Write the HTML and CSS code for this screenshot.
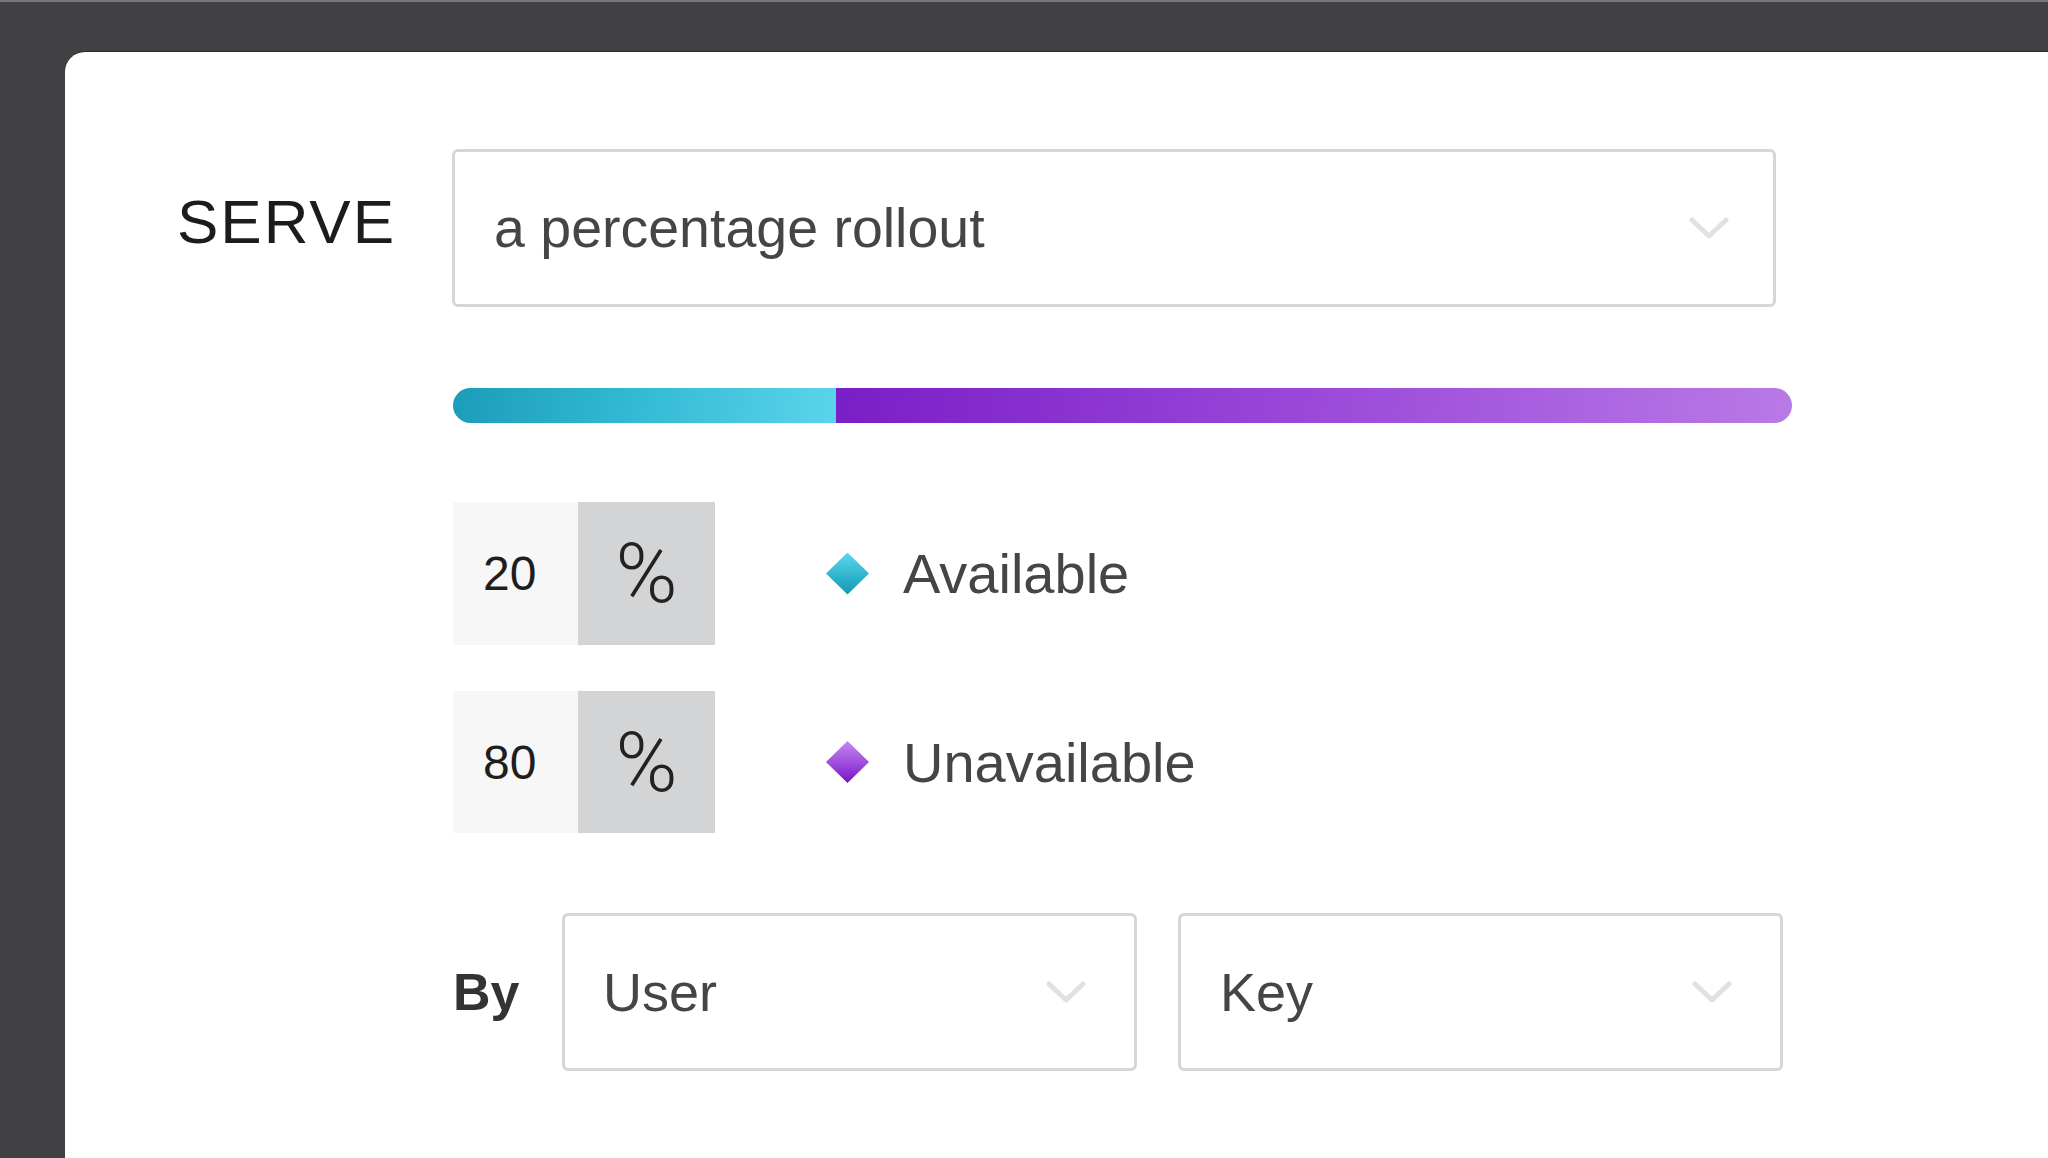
FILE: index.html
```html
<!DOCTYPE html>
<html lang="en">
<head>
<meta charset="utf-8">
<title>Serve percentage rollout</title>
<link rel="stylesheet" href="styles.css">
</head>
<body>
<div class="card">
  <div class="serve-row">
    <div class="serve-label">SERVE</div>
    <div class="select select-main">
      <span class="select-text">a percentage rollout</span>
      <svg class="chevron" viewBox="0 0 40 22" width="40" height="22"><polyline points="3,3 20,19 37,3" /></svg>
    </div>
  </div>
  <div class="indent">
    <div class="bar">
      <div class="seg seg-a" style="width:28.6%"></div>
      <div class="seg seg-b"></div>
    </div>
    <div class="alloc-row first">
      <div class="pct-box">
        <span class="pct-num">20</span>
        <span class="pct-sign">%</span>
      </div>
      <span class="diamond diamond-a"></span>
      <span class="variant">Available</span>
    </div>
    <div class="alloc-row second">
      <div class="pct-box">
        <span class="pct-num">80</span>
        <span class="pct-sign">%</span>
      </div>
      <span class="diamond diamond-b"></span>
      <span class="variant">Unavailable</span>
    </div>
    <div class="by-row">
      <span class="by">By</span>
      <div class="select select-user">
        <span class="select-text small">User</span>
        <svg class="chevron" viewBox="0 0 40 22" width="40" height="22"><polyline points="3,3 20,19 37,3" /></svg>
      </div>
      <div class="select select-key">
        <span class="select-text small">Key</span>
        <svg class="chevron" viewBox="0 0 40 22" width="40" height="22"><polyline points="3,3 20,19 37,3" /></svg>
      </div>
    </div>
  </div>
</div>
</body>
</html>
```
FILE: styles.css
```css
html, body {
  margin: 0;
  padding: 0;
}
body {
  background: #414143;
  height: 1158px;
  overflow: hidden;
  padding: 50px 0 0 65px;
  box-sizing: border-box;
  border-top: 2px solid #77777a;
  font-family: "Liberation Sans", Arial, sans-serif;
}
.card {
  background: #ffffff;
  border-top-left-radius: 20px;
  height: 1106px;
  padding: 97px 0 0 112px;
  box-sizing: border-box;
  box-shadow: 0 -1px 0 #2b2b2d;
}
.serve-row {
  display: flex;
  align-items: flex-start;
}
.serve-label {
  width: 275px;
  flex: none;
  font-size: 62px;
  line-height: 1;
  letter-spacing: 2px;
  color: #1c1c1c;
  margin-top: 42px;
}
.select {
  box-sizing: border-box;
  border: 3px solid #d6d6d6;
  border-radius: 6px;
  background: #fff;
  display: flex;
  align-items: center;
  justify-content: space-between;
  flex: none;
}
.select-main {
  width: 1324px;
  height: 158px;
  padding: 0 44px 0 39px;
}
.select-text {
  font-size: 55.5px;
  color: #454545;
  white-space: nowrap;
}
.select-text.small {
  font-size: 54px;
}
.chevron {
  flex: none;
  fill: none;
  stroke: #e1e1e1;
  stroke-width: 5;
  stroke-linecap: round;
  stroke-linejoin: round;
}
.indent {
  margin-left: 276px;
}
.bar {
  margin-top: 81px;
  width: 1339px;
  height: 35px;
  border-radius: 18px;
  overflow: hidden;
  display: flex;
}
.seg {
  height: 100%;
}
.seg-a {
  background: linear-gradient(100deg, #1a9db8 0%, #35bbd5 50%, #5bd4ea 100%);
}
.seg-b {
  flex: 1;
  background: linear-gradient(95deg, #7a1ec7 0%, #9844d8 45%, #b979e6 100%);
}
.alloc-row {
  display: flex;
  align-items: center;
  height: 143px;
}
.alloc-row.first {
  margin-top: 79px;
}
.alloc-row.second {
  margin-top: 46px;
  height: 142px;
}
.pct-box {
  display: flex;
  height: 100%;
  flex: none;
}
.pct-num {
  width: 125px;
  background: #f7f7f7;
  display: flex;
  align-items: center;
  padding-left: 30px;
  box-sizing: border-box;
  font-size: 48px;
  color: #1e1e1e;
}
.pct-sign {
  width: 137px;
  background: #d3d4d6;
  display: flex;
  align-items: center;
  justify-content: center;
  font-family: Roboto, "Liberation Sans", sans-serif;
  font-weight: 300;
  font-size: 84px;
  color: #222;
}
.diamond {
  width: 43px;
  height: 42px;
  margin-left: 111px;
  flex: none;
  clip-path: polygon(50% 0, 100% 50%, 50% 100%, 0 50%);
}
.diamond-a {
  background: linear-gradient(180deg, #5dd8ec 0%, #2fb4cd 55%, #1598b3 100%);
}
.diamond-b {
  background: linear-gradient(180deg, #c488ed 0%, #9c4bdc 55%, #7414c4 100%);
}
.variant {
  margin-left: 34px;
  font-size: 56px;
  color: #454545;
}
.by-row {
  margin-top: 80px;
  display: flex;
  align-items: center;
  height: 158px;
}
.by {
  width: 109px;
  flex: none;
  font-size: 52px;
  font-weight: bold;
  color: #333;
}
.select-user {
  width: 575px;
  height: 158px;
  padding: 0 48px 0 38px;
}
.select-key {
  width: 605px;
  height: 158px;
  margin-left: 41px;
  padding: 0 48px 0 39px;
}
```
